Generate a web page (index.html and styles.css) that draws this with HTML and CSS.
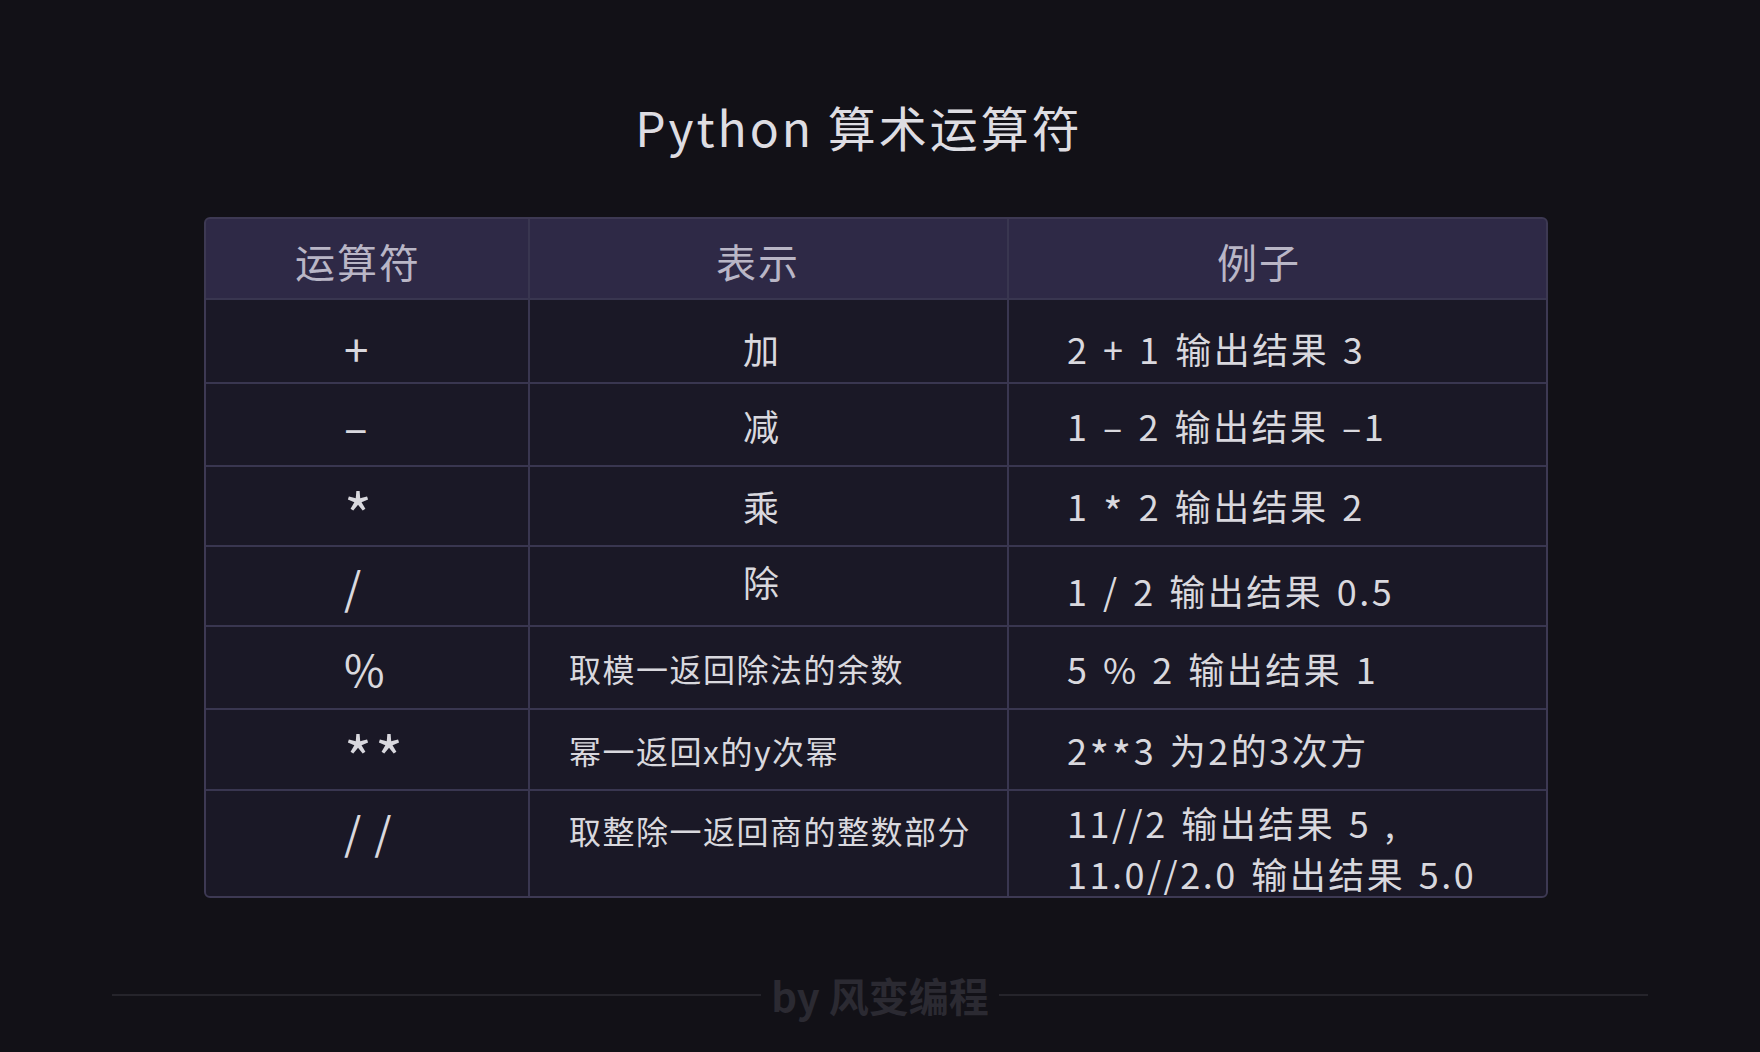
FILE: index.html
```html
<!DOCTYPE html>
<html lang="zh-CN">
<head>
<meta charset="utf-8">
<title>Python 算术运算符</title>
<link rel="stylesheet" href="styles.css">
</head>
<body>
<div class="page">
  <h1 class="title">Python 算术运算符</h1>
  <div class="table">
    <div class="cell head c1">运算符</div>
    <div class="cell head c2">表示</div>
    <div class="cell head c3">例子</div>

    <div class="cell sym r1">+</div>
    <div class="cell short r1">加</div>
    <div class="cell ex r1">2 + 1 输出结果 3</div>

    <div class="cell sym">–</div>
    <div class="cell short">减</div>
    <div class="cell ex">1 – 2 输出结果 –1</div>

    <div class="cell sym"><span class="t"><span class="ast">*</span></span></div>
    <div class="cell short">乘</div>
    <div class="cell ex"><span class="t">1 <span class="ast-sm">*</span> 2 输出结果 2</span></div>

    <div class="cell sym">/</div>
    <div class="cell short up">除</div>
    <div class="cell ex down">1 / 2 输出结果 0.5</div>

    <div class="cell sym">%</div>
    <div class="cell long">取模一返回除法的余数</div>
    <div class="cell ex">5 % 2 输出结果 1</div>

    <div class="cell sym stars"><span class="t"><span class="ast">**</span></span></div>
    <div class="cell long">幂一返回x的y次幂</div>
    <div class="cell ex"><span class="t">2<span class="ast-sm">**</span>3 为2的3次方</span></div>

    <div class="cell sym slashes r7">//</div>
    <div class="cell long r7">取整除一返回商的整数部分</div>
    <div class="cell ex multi">11//2 输出结果 5 ,<br>11.0//2.0 输出结果 5.0</div>
  </div>
  <div class="footer">
    <span class="rule"></span>
    <span class="brand">by 风变编程</span>
    <span class="rule"></span>
  </div>
</div>
</body>
</html>
```
FILE: styles.css
```css
html, body {
  margin: 0;
  padding: 0;
  background: #121117;
}
body {
  font-family: "Noto Sans CJK SC", "Noto Sans", sans-serif;
  color: #d9d8de;
}
.page {
  width: 1760px;
  height: 1052px;
  overflow: hidden;
}
.title {
  margin: 97px 0 0 0;
  padding-right: 42px;
  text-align: center;
  font-size: 48px;
  font-weight: 400;
  line-height: 58px;
  letter-spacing: 3px;
  color: #dedde2;
}
.table {
  margin: 62px 0 0 204px;
  width: 1340px;
  display: grid;
  grid-template-columns: 322px 477px 537px;
  grid-template-rows: 79px 82px 81px 78px 78px 81px 79px 105px;
  gap: 2px;
  background: #393650;
  border: 2px solid #3d3953;
  border-radius: 6px;
  overflow: hidden;
}
.cell {
  background: #1a1826;
  display: flex;
  align-items: center;
  font-size: 36px;
  letter-spacing: 2px;
  white-space: nowrap;
}
.t { display: block; }
.head {
  background: #2e2946;
  font-size: 40px;
  letter-spacing: 2px;
  color: #b9b6c6;
  padding-top: 4px;
}
.head.c1 { padding-left: 89px; }
.head.c2 { padding-left: 186px; }
.head.c3 { padding-left: 208px; }
.sym {
  padding-left: 138px;
  font-size: 44px;
  letter-spacing: 0;
}
.ast {
  font-size: 60px;
  vertical-align: -0.3em;
  line-height: 1;
}
.stars .ast { letter-spacing: 3px; }
.slashes { letter-spacing: 13px; }
.ast-sm {
  font-size: 42px;
  vertical-align: -0.2em;
  line-height: 1;
}
.short { padding-left: 213px; }
.long {
  padding-left: 39px;
  font-size: 32px;
  letter-spacing: 1.5px;
}
.ex {
  padding-left: 58px;
  letter-spacing: 2.5px;
  word-spacing: 3px;
}
.r1 { padding-top: 14px; }
.up { padding-bottom: 10px; }
.down { padding-top: 8px; }
.r7 { align-items: flex-start; padding-top: 8px; }
.long.r7 { padding-top: 16px; }
.multi {
  line-height: 51px;
  padding-top: 8px;
}
.footer {
  margin: 73px 112px 0 112px;
  display: flex;
  align-items: center;
  gap: 10px;
}
.rule {
  flex: 1;
  height: 2px;
  background: #25242b;
}
.brand {
  font-size: 40px;
  line-height: 48px;
  font-weight: 700;
  color: #2b2a32;
  letter-spacing: 0;
}
```
